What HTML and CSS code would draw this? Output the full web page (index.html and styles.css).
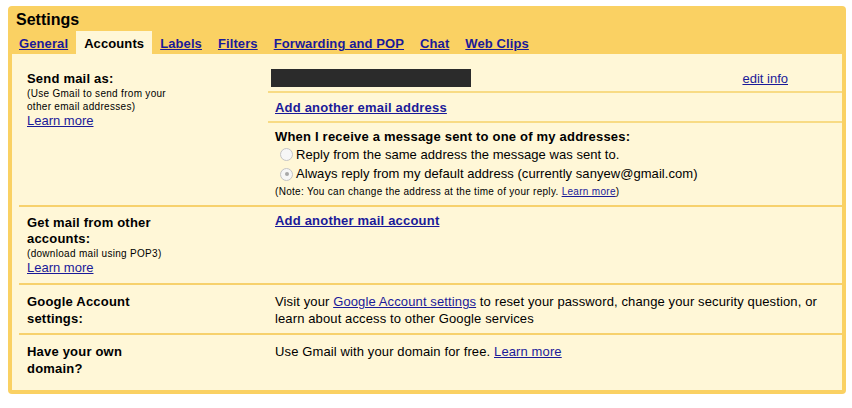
FILE: index.html
```html
<!DOCTYPE html>
<html lang="en">
<head>
<meta charset="UTF-8" />
<title>Settings</title>
<link rel="stylesheet" href="styles.css">
</head>
<body>

<div class="settings">
  <div class="title">Settings</div>
  <div class="tabs">
    <a class="tab" href="#">General</a>
    <span class="tab active">Accounts</span>
    <a class="tab" href="#">Labels</a>
    <a class="tab" href="#">Filters</a>
    <a class="tab" href="#">Forwarding and POP</a>
    <a class="tab" href="#">Chat</a>
    <a class="tab" href="#">Web Clips</a>
  </div>

  <div class="panel">
    <div class="row first">
      <div class="label">
        <div class="name">Send mail as:</div>
        <div class="hint">(Use Gmail to send from your other email addresses)</div>
        <a class="more" href="#">Learn more</a>
      </div>
      <div class="value">
        <div class="sub address">
          <span class="hidden-address"></span>
          <a href="#" class="edit">edit info</a>
        </div>
        <div class="sub add">
          <a href="#" class="strong">Add another email address</a>
        </div>
        <div class="sub reply">
          <div class="name">When I receive a message sent to one of my addresses:</div>
          <div class="option"><span class="radio"></span>Reply from the same address the message was sent to.</div>
          <div class="option"><span class="radio checked"></span>Always reply from my default address (currently sanyew@gmail.com)</div>
          <div class="note">(Note: You can change the address at the time of your reply. <a href="#">Learn more</a>)</div>
        </div>
      </div>
    </div>

    <div class="row pop">
      <div class="label">
        <div class="name">Get mail from other accounts:</div>
        <div class="hint">(download mail using POP3)</div>
        <a class="more" href="#">Learn more</a>
      </div>
      <div class="value">
        <a href="#" class="strong">Add another mail account</a>
      </div>
    </div>

    <div class="row">
      <div class="label">
        <div class="name">Google Account settings:</div>
      </div>
      <div class="value text">
        Visit your <a href="#">Google Account settings</a> to reset your password, change your security question, or learn about access to other Google services
      </div>
    </div>

    <div class="row last">
      <div class="label">
        <div class="name">Have your own domain?</div>
      </div>
      <div class="value text">
        Use Gmail with your domain for free. <a href="#">Learn more</a>
      </div>
    </div>
  </div>
</div>

</body>
</html>
```

FILE: styles.css
```css
body {
  margin: 0;
  background: #fff;
  font-family: "Liberation Sans", Arial, sans-serif;
  font-size: 13px;
  color: #000;
}
a {
  color: #1a1a99;
  text-decoration: underline;
}

.settings {
  margin: 6px 0 0 8px;
  width: 838px;
  box-sizing: border-box;
  background: #fad163;
  border-radius: 4px;
  padding: 0 4px 4px 4px;
}
.title {
  font-size: 16px;
  font-weight: 700;
  padding: 4px 0 0 4px;
  line-height: 20px;
}
.tabs {
  display: flex;
  margin-top: 2px;
  margin-left: -1px;
}
.tab {
  padding: 4px 8px 3px;
  line-height: 15px;
  font-weight: 700;
  letter-spacing: 0.1px;
}
.tab.active {
  background: #fff7d7;
  padding-top: 5px;
  margin-top: -1px;
}

.panel {
  background: #fff7d7;
  padding-bottom: 7px;
}
.row {
  display: grid;
  grid-template-columns: 249px 1fr;
  margin-left: 7px;
  border-top: 2px solid #f7d16c;
  padding: 8px 0 6px;
}
.row.first {
  border-top: none;
  padding: 0;
}
.row.pop {
  padding-bottom: 8px;
}
.label {
  padding-left: 8px;
}
.row.first .label {
  padding-top: 16px;
}
.name {
  font-weight: 700;
  line-height: 17px;
  letter-spacing: 0.2px;
}
.label .name {
  width: 140px;
}
.hint {
  font-size: 10px;
  line-height: 13px;
  letter-spacing: 0.3px;
  width: 150px;
}
.row.pop .name {
  line-height: 16px;
}
.more {
  display: block;
  line-height: 15px;
}

.value {
  padding-left: 7px;
  line-height: 17px;
}
.row.first .value {
  padding-left: 0;
}
.row.pop .value {
  margin-top: -3px;
}
.text {
  padding-right: 10px;
  letter-spacing: 0.12px;
}
.strong {
  font-weight: 700;
  letter-spacing: 0.2px;
}

.sub {
  padding-left: 7px;
  border-bottom: 2px solid #f8db84;
}
.sub.address {
  display: flex;
  justify-content: space-between;
  align-items: center;
  padding: 14px 54px 4px 3px;
}
.hidden-address {
  display: block;
  width: 200px;
  height: 18px;
  background: #2b2b2b;
}
.edit {
  margin-top: 2px;
}
.sub.add {
  padding-top: 6px;
  padding-bottom: 5px;
}
.sub.reply {
  border-bottom: none;
  padding-top: 5px;
  padding-bottom: 6px;
}
.option {
  display: flex;
  align-items: center;
  line-height: 19px;
  margin-left: 5px;
  letter-spacing: 0.05px;
}
.option + .option {
  line-height: 20px;
}
.radio {
  width: 11px;
  height: 11px;
  border: 1px solid #c4c4c4;
  border-radius: 50%;
  background: #f6f6f6;
  margin-right: 3px;
  display: flex;
  align-items: center;
  justify-content: center;
}
.radio.checked::after {
  content: "";
  width: 4px;
  height: 4px;
  border-radius: 50%;
  background: #a8a8a8;
}
.note {
  font-size: 10px;
  line-height: 14px;
  letter-spacing: 0.3px;
  margin-top: 1px;
}
```
